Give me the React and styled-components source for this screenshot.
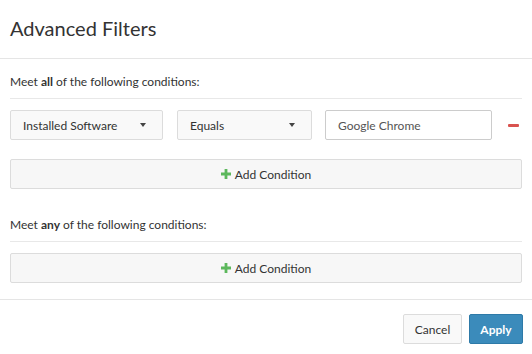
import React from "react";
import styled, { createGlobalStyle } from "styled-components";

const Global = createGlobalStyle`
  html, body { margin: 0; padding: 0; background: #fff; }
  body { font-family: Lato, "Open Sans", sans-serif; color: #333; }
  * { box-sizing: border-box; }
`;

const Modal = styled.div`
  width: 532px;
  height: 354px;
  background: #fff;
  display: flex;
  flex-direction: column;
`;

const Header = styled.div`
  height: 59px;
  padding: 0 10px;
  display: flex;
  align-items: center;
  border-bottom: 1px solid #e5e5e5;
`;

const Title = styled.h1`
  margin: 0 0 2px;
  font-size: 20px;
  font-weight: 400;
  color: #333;
`;

const Body = styled.div`
  padding: 0 10px;
`;

const SectionLabel = styled.div`
  margin-top: ${(p) => p.$top}px;
  padding-bottom: 7px;
  border-bottom: 1px solid #e8e8e8;
  font-size: 12px;
  line-height: 18px;
  color: #333;
  b { font-weight: 700; }
`;

const Row = styled.div`
  margin-top: 11px;
  display: flex;
  align-items: center;
  height: 30px;
`;

const Select = styled.div`
  width: ${(p) => p.$w}px;
  height: 30px;
  margin-right: ${(p) => p.$mr}px;
  padding: 0 12px;
  border: 1px solid #dcdcdc;
  border-radius: 2px;
  background: #f9f9f9;
  display: flex;
  align-items: center;
  justify-content: space-between;
  font-size: 12px;
  color: #333;
`;

const Caret = styled.span`
  width: 0;
  height: 0;
  border-left: 3.5px solid transparent;
  border-right: 3.5px solid transparent;
  border-top: 4px solid #444;
  margin-right: 4px;
`;

const Input = styled.div`
  width: 167px;
  height: 30px;
  padding: 0 12px;
  border: 1px solid #ccc;
  border-radius: 2px;
  background: #fff;
  display: flex;
  align-items: center;
  font-size: 12px;
  color: #555;
`;

const Remove = styled.span`
  margin-left: 16px;
  width: 11px;
  height: 3px;
  background: #d9534f;
  border-radius: 1px;
`;

const AddButton = styled.div`
  margin-top: ${(p) => p.$top}px;
  height: 30px;
  border: 1px solid #dcdcdc;
  border-radius: 2px;
  background: #f7f7f7;
  display: flex;
  align-items: center;
  justify-content: center;
  gap: 4px;
  font-size: 12px;
  color: #333;
`;

const Plus = styled.svg`
  width: 10px;
  height: 10px;
  display: block;
`;

const Footer = styled.div`
  margin-top: 16px;
  border-top: 1px solid #e5e5e5;
  padding: 14px 9px 0 0;
  display: flex;
  justify-content: flex-end;
  gap: 7px;
`;

const Btn = styled.div`
  width: ${(p) => p.$w}px;
  height: 30px;
  border: 1px solid ${(p) => (p.$primary ? "#2e7aa8" : "#dcdcdc")};
  border-radius: 2px;
  background: ${(p) => (p.$primary ? "#3b8bbb" : "#f9f9f9")};
  color: ${(p) => (p.$primary ? "#fff" : "#333")};
  font-weight: ${(p) => (p.$primary ? 700 : 400)};
  display: flex;
  align-items: center;
  justify-content: center;
  font-size: 12px;
`;

const PlusIcon = () => (
  <Plus viewBox="0 0 10 10">
    <path d="M3.6 0h2.8v3.6H10v2.8H6.4V10H3.6V6.4H0V3.6h3.6z" fill="#5cb85c" />
  </Plus>
);

export default function App() {
  return (
    <Modal>
      <Global />
      <Header>
        <Title>Advanced Filters</Title>
      </Header>
      <Body>
        <SectionLabel $top={14}>
          Meet <b>all</b> of the following conditions:
        </SectionLabel>
        <Row>
          <Select $w={153} $mr={14}>
            Installed Software <Caret />
          </Select>
          <Select $w={135} $mr={13}>
            Equals <Caret />
          </Select>
          <Input>Google Chrome</Input>
          <Remove />
        </Row>
        <AddButton $top={19}>
          <PlusIcon /> Add Condition
        </AddButton>
        <SectionLabel $top={27}>
          Meet <b>any</b> of the following conditions:
        </SectionLabel>
        <AddButton $top={11}>
          <PlusIcon /> Add Condition
        </AddButton>
      </Body>
      <Footer>
        <Btn $w={59}>Cancel</Btn>
        <Btn $w={54} $primary>Apply</Btn>
      </Footer>
    </Modal>
  );
}
